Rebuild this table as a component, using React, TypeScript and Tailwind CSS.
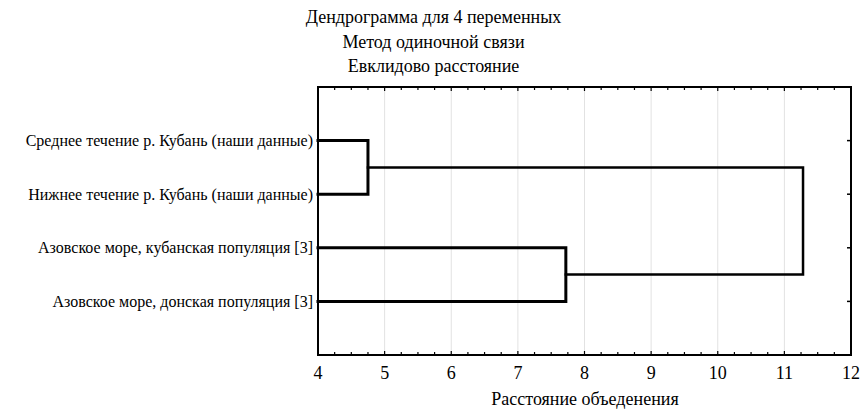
import React from "react";

const X0 = 318;
const X1 = 851;
const Y0 = 87;
const Y1 = 355;
const unit = (X1 - X0) / 8;
const xv = (v: number) => X0 + (v - 4) * unit;
const leafY = [0, 1, 2, 3].map((i) => Y0 + ((Y1 - Y0) / 5) * (i + 1));

const labels = [
  "Среднее течение р. Кубань (наши данные)",
  "Нижнее течение р. Кубань (наши данные)",
  "Азовское море, кубанская популяция [3]",
  "Азовское море, донская популяция [3]",
];

export default function App() {
  const n1 = xv(4.75);
  const n2 = xv(7.72);
  const n3 = xv(11.28);
  const y12 = (leafY[0] + leafY[1]) / 2;
  const y34 = (leafY[2] + leafY[3]) / 2;

  const minorTicks: number[] = [];
  for (let i = 1; i < 32; i++) minorTicks.push(X0 + (i * unit) / 4);

  return (
    <div className="w-[867px] h-[414px] bg-white text-black flex flex-col overflow-hidden font-['Liberation_Serif','Times_New_Roman',serif]">
      <div className="flex flex-col items-center pt-[5px] h-[79px] text-[18px] leading-[24.5px]">
        <div>Дендрограмма для 4 переменных</div>
        <div>Метод одиночной связи</div>
        <div>Евклидово расстояние</div>
      </div>
      <svg width={867} height={335} viewBox="0 79 867 335" className="block">
        {[1, 2, 3, 4, 5, 6, 7].map((k) => (
          <line
            key={k}
            x1={X0 + k * unit}
            x2={X0 + k * unit}
            y1={Y0}
            y2={Y1}
            stroke="#e2e2e2"
            strokeWidth={1}
          />
        ))}
        {minorTicks.map((x, i) => {
          const major = (i + 1) % 4 === 0;
          const len = major ? 4 : 3;
          return (
            <g key={i}>
              <line x1={x} x2={x} y1={Y0} y2={Y0 + len} stroke="#000" strokeWidth={1.2} />
              <line x1={x} x2={x} y1={Y1} y2={Y1 - len} stroke="#000" strokeWidth={1.2} />
            </g>
          );
        })}
        {leafY.map((y, i) => (
          <line key={i} x1={X1} x2={X1 - 4} y1={y} y2={y} stroke="#000" strokeWidth={1.5} />
        ))}
        <rect
          x={X0}
          y={Y0}
          width={X1 - X0}
          height={Y1 - Y0}
          fill="none"
          stroke="#000"
          strokeWidth={2}
        />
        <g stroke="#000" strokeWidth={3} fill="none" strokeLinecap="square">
          <path d={`M${X0} ${leafY[0]} H${n1} V${leafY[1]} H${X0}`} />
          <path d={`M${X0} ${leafY[2]} H${n2} V${leafY[3]} H${X0}`} />
        </g>
        <g stroke="#000" strokeWidth={2.5} fill="none" strokeLinecap="square">
          <path d={`M${n1} ${y12} H${n3} V${y34} H${n2}`} />
        </g>
        {labels.map((t, i) => (
          <text key={i} x={313} y={leafY[i] + 5.5} textAnchor="end" fontSize={16} fill="#000">
            {t}
          </text>
        ))}
        {[4, 5, 6, 7, 8, 9, 10, 11, 12].map((v) => (
          <text key={v} x={xv(v)} y={378.5} textAnchor="middle" fontSize={18} fill="#000">
            {v}
          </text>
        ))}
        <text x={585} y={405} textAnchor="middle" fontSize={18} fill="#000">
          Расстояние объеденения
        </text>
      </svg>
    </div>
  );
}
